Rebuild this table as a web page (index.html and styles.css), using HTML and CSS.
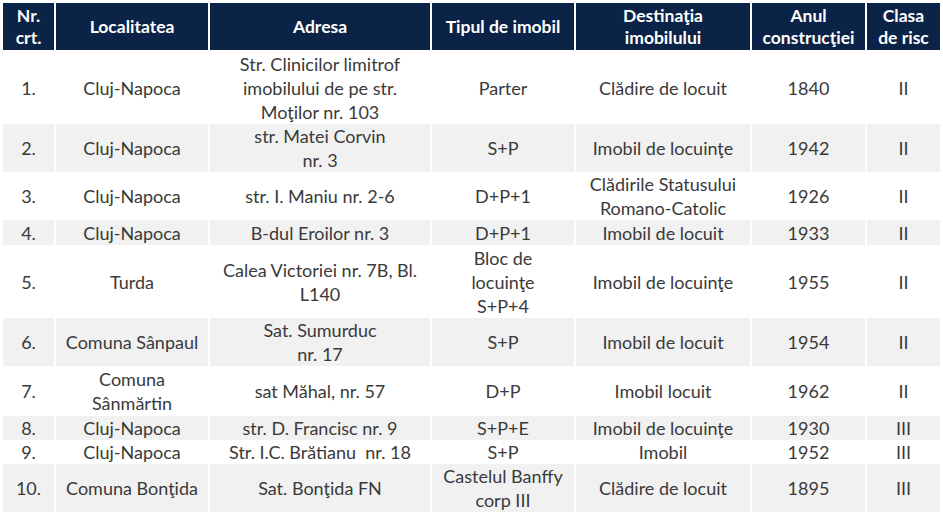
FILE: index.html
```
<!DOCTYPE html>
<html lang="ro">
<head>
<meta charset="utf-8">
<link rel="stylesheet" href="styles.css">
</head>
<body>
<table class="tbl">
  <colgroup>
    <col class="c1"><col class="c2"><col class="c3"><col class="c4"><col class="c5"><col class="c6"><col class="c7">
  </colgroup>
  <thead>
    <tr>
      <th>Nr.<br>crt.</th>
      <th>Localitatea</th>
      <th>Adresa</th>
      <th>Tipul de imobil</th>
      <th>Destinaţia<br>imobilului</th>
      <th>Anul<br>construcţiei</th>
      <th>Clasa<br>de risc</th>
    </tr>
  </thead>
  <tbody>
    <tr class="h71">
      <td>1.</td><td>Cluj-Napoca</td><td>Str. Clinicilor limitrof<br>imobilului de pe str.<br>Moţilor nr. 103</td><td>Parter</td><td>Clădire de locuit</td><td>1840</td><td>II</td>
    </tr>
    <tr class="gray h48">
      <td>2.</td><td>Cluj-Napoca</td><td>str. Matei Corvin<br>nr. 3</td><td>S+P</td><td>Imobil de locuinţe</td><td>1942</td><td>II</td>
    </tr>
    <tr class="h48">
      <td>3.</td><td>Cluj-Napoca</td><td>str. I. Maniu nr. 2-6</td><td>D+P+1</td><td>Clădirile Statusului<br>Romano-Catolic</td><td>1926</td><td>II</td>
    </tr>
    <tr class="gray h25">
      <td>4.</td><td>Cluj-Napoca</td><td>B-dul Eroilor nr. 3</td><td>D+P+1</td><td>Imobil de locuit</td><td>1933</td><td>II</td>
    </tr>
    <tr class="h73">
      <td>5.</td><td>Turda</td><td>Calea Victoriei nr. 7B, Bl.<br>L140</td><td>Bloc de<br>locuinţe<br>S+P+4</td><td>Imobil de locuinţe</td><td>1955</td><td>II</td>
    </tr>
    <tr class="gray h47">
      <td>6.</td><td>Comuna Sânpaul</td><td>Sat. Sumurduc<br>nr. 17</td><td>S+P</td><td>Imobil de locuit</td><td>1954</td><td>II</td>
    </tr>
    <tr class="h50">
      <td>7.</td><td>Comuna<br>Sânmărtin</td><td>sat Măhal, nr. 57</td><td>D+P</td><td>Imobil locuit</td><td>1962</td><td>II</td>
    </tr>
    <tr class="gray h24">
      <td>8.</td><td>Cluj-Napoca</td><td>str. D. Francisc nr. 9</td><td>S+P+E</td><td>Imobil de locuinţe</td><td>1930</td><td>III</td>
    </tr>
    <tr class="h24">
      <td>9.</td><td>Cluj-Napoca</td><td>Str. I.C. Brătianu&nbsp; nr. 18</td><td>S+P</td><td>Imobil</td><td>1952</td><td>III</td>
    </tr>
    <tr class="gray h48">
      <td>10.</td><td>Comuna Bonţida</td><td>Sat. Bonţida FN</td><td>Castelul Banffy<br>corp III</td><td>Clădire de locuit</td><td>1895</td><td>III</td>
    </tr>
  </tbody>
</table>
</body>
</html>
```
FILE: styles.css
```
html, body {
  margin: 0;
  padding: 0;
  background: #ffffff;
  overflow: hidden;
}

.tbl {
  margin: 3px 0 0 1px;
  border-collapse: separate;
  border-spacing: 2px 0;
  table-layout: fixed;
  width: 941px;
  font-family: Lato, "Open Sans", "Liberation Sans", sans-serif;
  font-size: 18px;
  color: #3a3a3a;
}

.c1 { width: 51px; }
.c2 { width: 152px; }
.c3 { width: 220px; }
.c4 { width: 142px; }
.c5 { width: 174px; }
.c6 { width: 113px; }
.c7 { width: 73px; }

.tbl th {
  background: #0b2346;
  color: #ffffff;
  font-weight: 700;
  font-size: 17.5px;
  height: 47px;
  padding: 0;
  line-height: 22px;
  text-align: center;
  vertical-align: middle;
  border-bottom: 2px solid #ffffff;
}

.tbl td {
  padding: 0;
  line-height: 24px;
  text-align: center;
  vertical-align: middle;
  white-space: nowrap;
}

.gray td {
  background: #f1f1f1;
}

.h71 td { height: 71px; }
.h73 td { height: 73px; }
.h50 td { height: 50px; }
.h48 td { height: 48px; }
.h47 td { height: 47px; }
.h25 td { height: 25px; }
.h24 td { height: 24px; }
```
